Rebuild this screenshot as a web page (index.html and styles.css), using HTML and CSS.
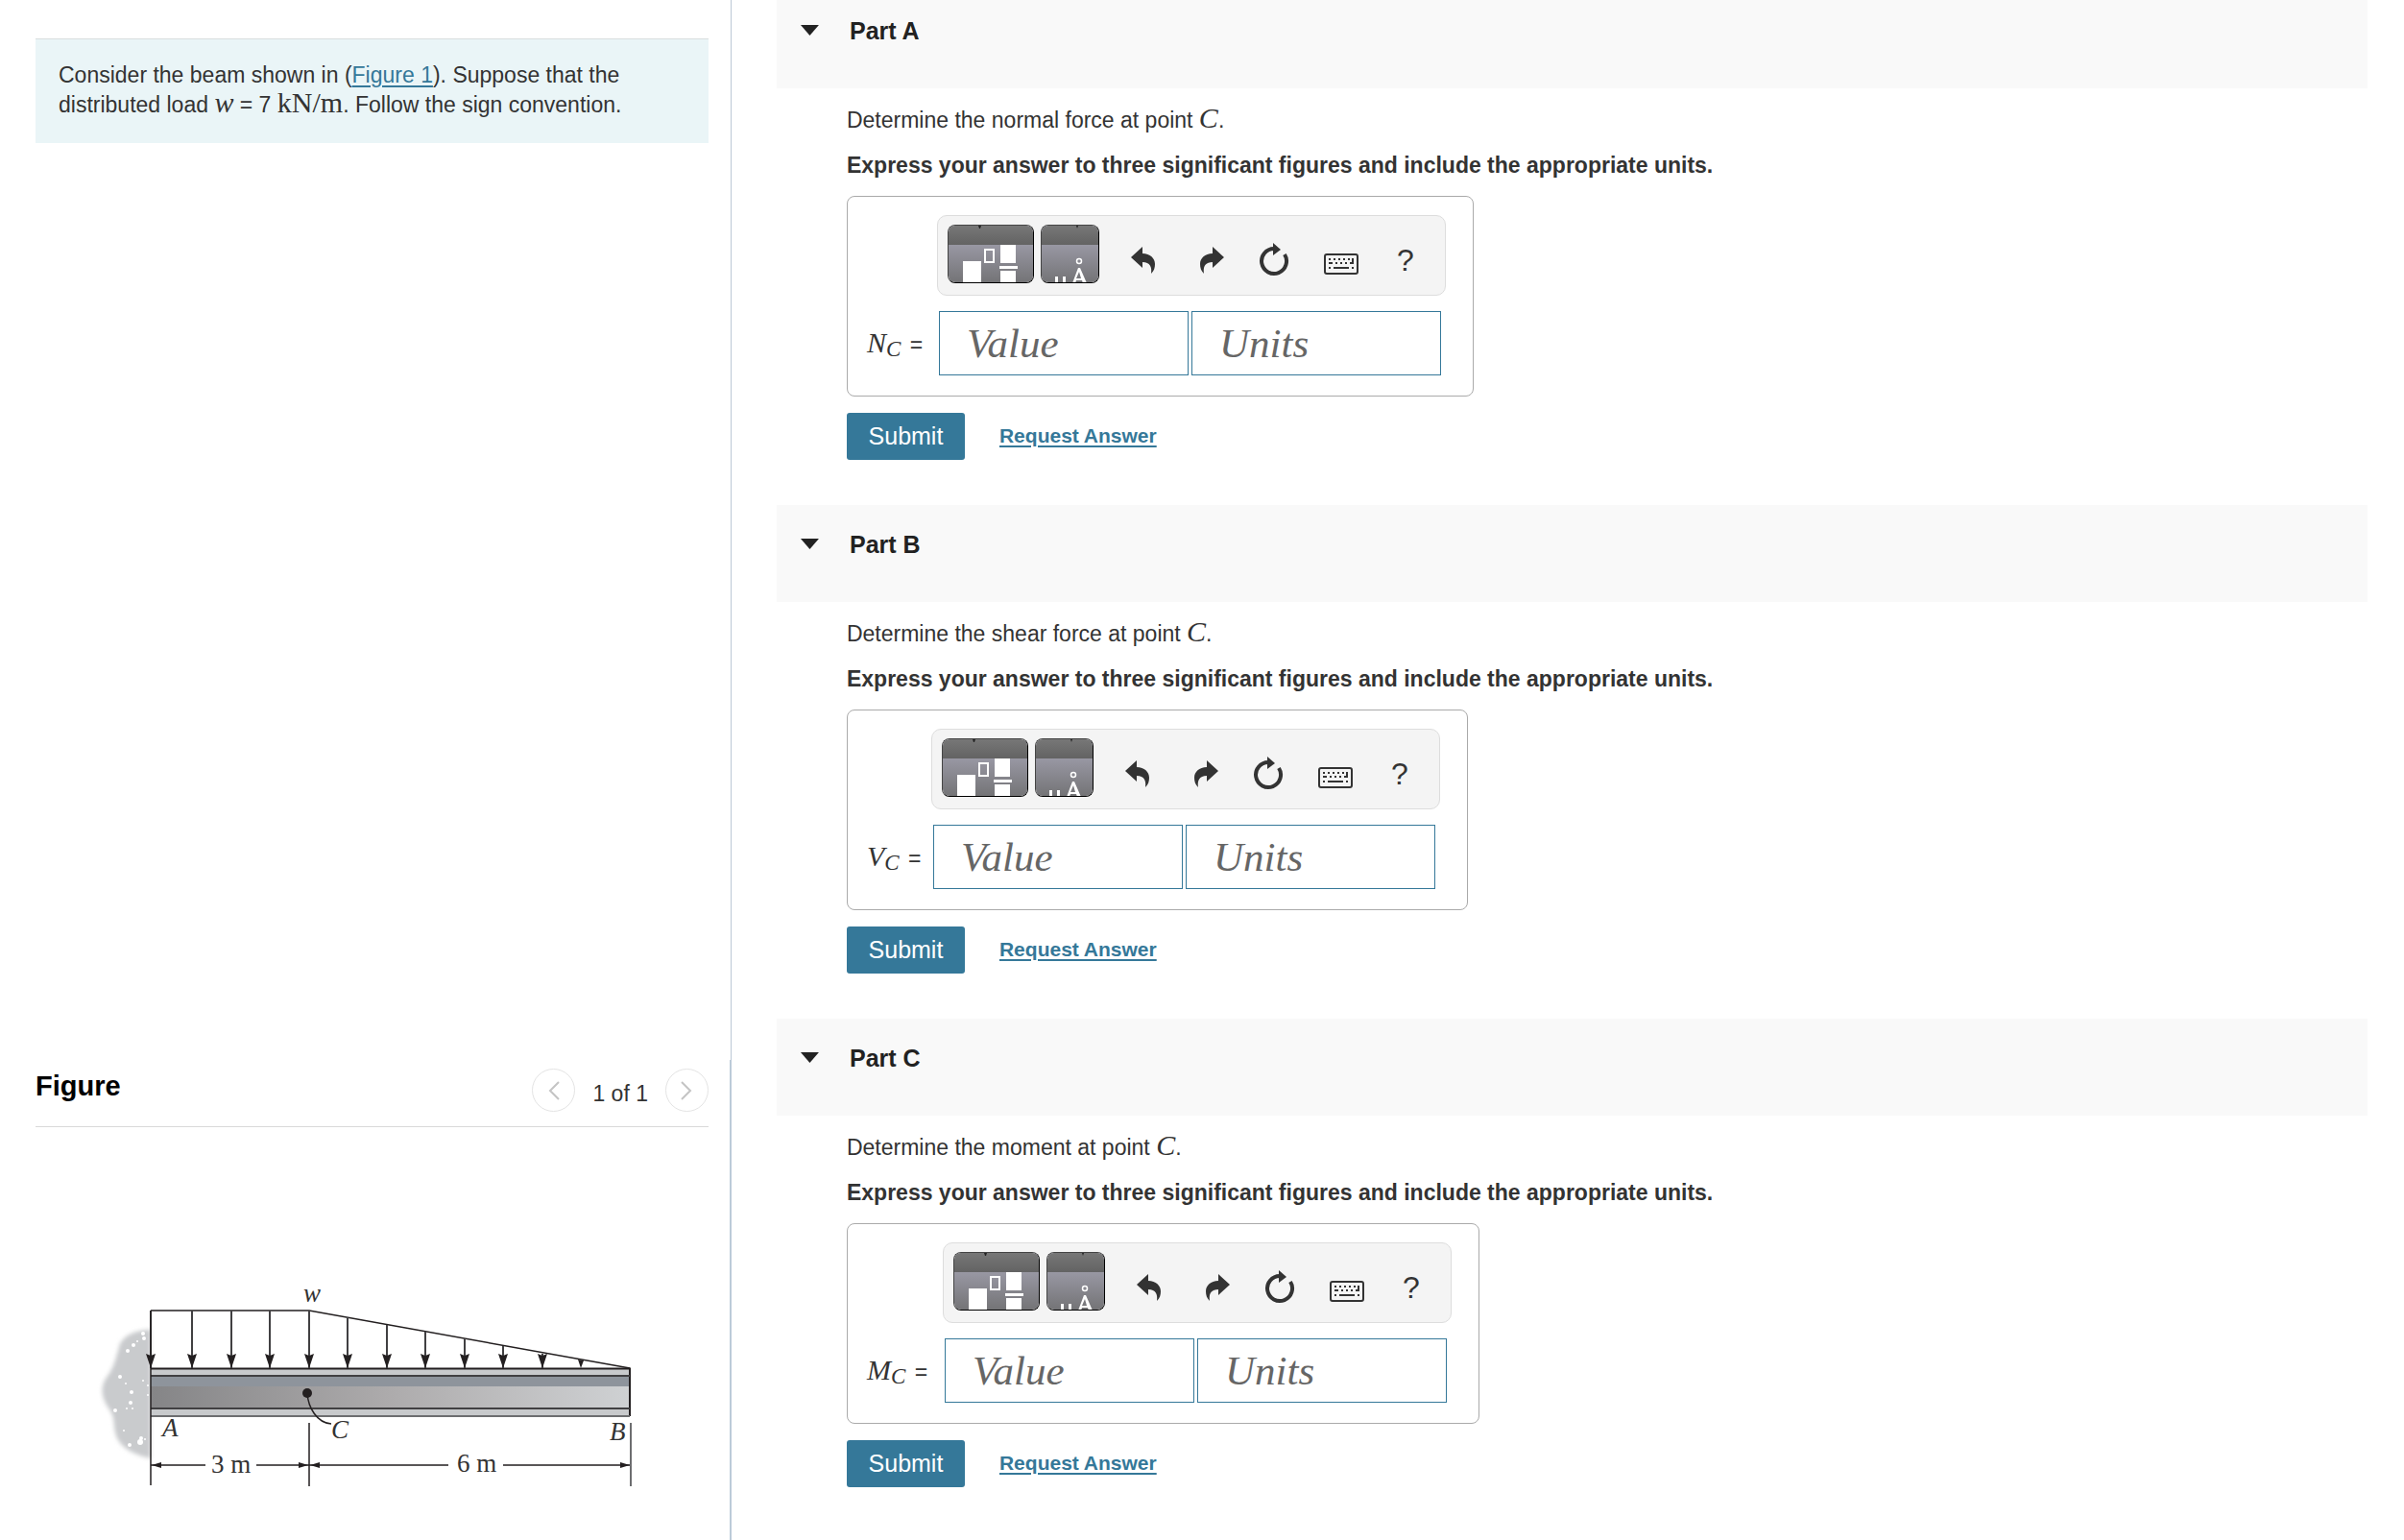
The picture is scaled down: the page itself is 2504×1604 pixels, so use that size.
FILE: index.html
```html
<!DOCTYPE html>
<html lang="en">
<head>
  <meta charset="UTF-8">
  <meta name="viewport" content="width=device-width, initial-scale=1.0">
  <title>Beam internal forces</title>
  <link rel="stylesheet" href="styles.css">
</head>
<body>
  <!-- shared icons -->
  <svg class="sprite" width="0" height="0" aria-hidden="true">
    <defs>
      <linearGradient id="capGrad" x1="0" y1="0" x2="0" y2="1">
        <stop offset="0" stop-color="#777"/>
        <stop offset="1" stop-color="#636363"/>
      </linearGradient>
      <linearGradient id="keyGrad" x1="0" y1="0" x2="0" y2="1">
        <stop offset=".3" stop-color="#9a99a5"/>
        <stop offset="1" stop-color="#727274"/>
      </linearGradient>
    </defs>
    <symbol id="templates" viewBox="0 0 90 61">
      <rect width="90" height="61" fill="url(#keyGrad)"/>
      <rect width="90" height="20" fill="url(#capGrad)"/>
      <path d="M31 0h3l-1 3h-1z" fill="#222"/>
      <path d="M15 37h19v23H15zM54 20h16v19H54zM53 42h19v3H53zM54 47h16v13H54z" fill="#fff"/>
      <rect x="38" y="25" width="9" height="13" fill="none" stroke="#fff" stroke-width="2"/>
    </symbol>
    <symbol id="symbols" viewBox="0 0 61 61">
      <rect width="61" height="61" fill="url(#keyGrad)"/>
      <rect width="61" height="20" fill="url(#capGrad)"/>
      <path d="M36 0h2l-1 3z" fill="#222"/>
      <path d="M14 53h3v7h-3zM22 53h3v7h-3z" fill="#fff"/>
      <path d="M38 44h2l7 16h-4l-1-3h-6l-1 3h-3zM39 48l-3 7h5z" fill="#fff" fill-rule="evenodd"/>
      <circle cx="39" cy="37" r="2.500" fill="none" stroke="#fff" stroke-width="1.500"/>
    </symbol>
    <symbol id="undo" viewBox="0 0 26 30">
      <path d="M0 12L12 1v7c8 0 13 5 13 11 0 4-1 7-4 10 1-7-1-12-9-12v6z"/>
    </symbol>
    <symbol id="redo" viewBox="0 0 26 30">
      <path d="M26 12L14 1v7C6 8 1 13 1 19c0 4 1 7 4 10-1-7 1-12 9-12v6z"/>
    </symbol>
    <symbol id="reset" viewBox="0 0 32 36">
      <path d="M16 6a13 13 0 1 0 11 6" fill="none" stroke="#333" stroke-width="4"/>
      <path d="M15 0l8 7-8 6z"/>
    </symbol>
    <symbol id="keyboard" viewBox="0 0 36 22">
      <rect x="1" y="1" width="34" height="20" rx="2" fill="none" stroke="#333" stroke-width="2"/>
      <path d="M5 5h2v2H5zM10 5h2v2h-2zM15 5h2v2h-2zM20 5h2v2h-2zM25 5h2v2h-2zM29 5h2v6h-4V9h2zM5 9h4v2H5zM12 9h2v2h-2zM17 9h2v2h-2zM22 9h2v2h-2zM5 14h2v2H5zM10 14h16v2H10zM29 14h2v2h-2z"/>
    </symbol>
  </svg>

  <div class="page">
    <aside class="side">
      <div class="intro-pane">
        <div class="intro">
          Consider the beam shown in (<a href="#figure">Figure 1</a>). Suppose that the distributed load <i class="math">w</i> = 7 <span class="math">kN/m</span>. Follow the sign convention.
        </div>
      </div>
      <section class="figure-pane" id="figure">
        <div class="figure-head">
          <h2>Figure</h2>
          <div class="pager">
            <button type="button" aria-label="Previous figure"><svg width="12" height="20" viewBox="0 0 12 20"><path d="M11 1L2 10l9 9"/></svg></button>
            <span>1 of 1</span>
            <button type="button" aria-label="Next figure"><svg width="12" height="20" viewBox="0 0 12 20"><path d="M1 1l9 9-9 9"/></svg></button>
          </div>
        </div>
        <svg class="beam" width="570" height="230" viewBox="0 0 570 230" role="img" aria-label="Beam AB with a distributed load">
          <defs>
            <linearGradient id="webGrad">
              <stop offset="0" stop-color="#858587"/>
              <stop offset=".5" stop-color="#adabac"/>
              <stop offset="1" stop-color="#cfd1d3"/>
            </linearGradient>
            <filter id="soft"><feGaussianBlur stdDeviation="2"/></filter>
            <marker id="load" viewBox="0 0 10 15" refX="5" refY="15" markerWidth="10" markerHeight="15" markerUnits="userSpaceOnUse" orient="0">
              <path d="M0 0l5 2 5-2-5 15z" fill="#231f20"/>
            </marker>
          </defs>
          <!-- wall -->
          <path d="M57 56C42 56 27 62 24 74C20 88 18 97 10 107C4 117 6 128 14 139C21 149 17 158 22 169C28 181 43 187 57 190z" fill="#c9cbcd" filter="url(#soft)"/>
          <g fill="#fff">
            <circle cx="49" cy="60" r="2"/><circle cx="50" cy="65" r="2"/><circle cx="39" cy="72" r="2"/><circle cx="33" cy="78" r="2"/><circle cx="43" cy="68" r="1"/>
            <circle cx="25" cy="105" r="2"/><circle cx="31" cy="112" r="1"/><circle cx="37" cy="121" r="2"/><circle cx="49" cy="109" r="1"/><circle cx="36" cy="132" r="2"/>
            <circle cx="32" cy="138" r="1"/><circle cx="38" cy="138" r="1"/><circle cx="20" cy="140" r="2"/><circle cx="54" cy="114" r="1"/><circle cx="54" cy="124" r="1"/>
            <circle cx="47" cy="169" r="2"/><circle cx="46" cy="173" r="3"/><circle cx="35" cy="176" r="2"/><circle cx="29" cy="161" r="1"/><circle cx="51" cy="170" r="1"/>
          </g>
          <!-- beam -->
          <rect x="57" y="96" width="499" height="50" fill="#c8cacc"/>
          <rect x="57" y="104" width="499" height="12" fill="#8e949c"/>
          <rect x="57" y="115" width="499" height="23" fill="url(#webGrad)"/>
          <g stroke="#414042" stroke-width="2" fill="none">
            <path d="M57 96.500H556V146" stroke="#231f20"/>
            <path d="M57 104H556M57 138H556"/>
            <path d="M57 146H556" stroke="#6d6e70"/>
          </g>
          <!-- load -->
          <path d="M57 36H222L556 96" fill="none" stroke="#231f20" stroke-width="1.500"/>
          <g class="arrows">
            <path d="M57 96V36"/><path d="M100 96V36"/><path d="M141 96V36"/><path d="M181 96V36"/><path d="M222 96V36"/>
            <path d="M262 96V43"/><path d="M303 96V51"/><path d="M343 96V58"/><path d="M384 96V65"/><path d="M424 96V73"/><path d="M465 96V81"/>
          </g>
          <path d="M502 87l6 1-3 8z" fill="#231f20"/>
          <!-- dimensions -->
          <g fill="none" stroke="#231f20" stroke-width="1.500">
            <path d="M57 36V218M222 153V219"/>
            <path d="M557 153V219" stroke="#6d6e70" stroke-width="2"/>
            <path d="M57 197H114M167 197H222M222 197H367M424 197H556"/>
            <path d="M220 122C221 137 230 153 245 154"/>
          </g>
          <path d="M58 197l10-3v6zM221 197l-10-3v6zM223 197l10-3v6zM556 197l-10-3v6z" fill="#231f20"/>
          <circle cx="220" cy="122" r="5" fill="#231f20"/>
          <g class="beam-text">
            <text x="216" y="27" class="var">w</text>
            <text x="69" y="167" class="var">A</text>
            <text x="245" y="169" class="var">C</text>
            <text x="535" y="171" class="var">B</text>
            <text x="120" y="205">3 m</text>
            <text x="376" y="204">6 m</text>
          </g>
        </svg>
      </section>
    </aside>

    <main class="parts">
      <section class="part part-a">
        <h2 class="part-head"><span class="caret"></span>Part A</h2>
        <div class="part-body">
          <p>Determine the normal force at point <i class="math">C</i>.</p>
          <p class="express">Express your answer to three significant figures and include the appropriate units.</p>
          <div class="answer">
            <div class="toolbar">
              <button type="button" class="key" aria-label="Templates"><svg width="90" height="61"><use href="#templates"/></svg></button>
              <button type="button" class="key key-sm" aria-label="Symbols"><svg width="61" height="61"><use href="#symbols"/></svg></button>
              <div class="tools">
                <button type="button" aria-label="Undo"><svg width="26" height="30"><use href="#undo"/></svg></button>
                <button type="button" class="redo" aria-label="Redo"><svg width="26" height="30"><use href="#redo"/></svg></button>
                <button type="button" aria-label="Reset"><svg width="32" height="36"><use href="#reset"/></svg></button>
                <button type="button" class="kbd" aria-label="Keyboard shortcuts"><svg width="36" height="22"><use href="#keyboard"/></svg></button>
                <button type="button" class="help">?</button>
              </div>
            </div>
            <label class="answer-label" for="valueA"><i>N<sub>C</sub></i> =</label>
            <div class="fields">
              <input type="text" id="valueA" placeholder="Value">
              <input type="text" aria-label="Units" placeholder="Units">
            </div>
          </div>
          <div class="actions">
            <button type="submit" class="submit">Submit</button>
            <a href="#">Request Answer</a>
          </div>
        </div>
      </section>

      <section class="part part-b">
        <h2 class="part-head"><span class="caret"></span>Part B</h2>
        <div class="part-body">
          <p>Determine the shear force at point <i class="math">C</i>.</p>
          <p class="express">Express your answer to three significant figures and include the appropriate units.</p>
          <div class="answer">
            <div class="toolbar">
              <button type="button" class="key" aria-label="Templates"><svg width="90" height="61"><use href="#templates"/></svg></button>
              <button type="button" class="key key-sm" aria-label="Symbols"><svg width="61" height="61"><use href="#symbols"/></svg></button>
              <div class="tools">
                <button type="button" aria-label="Undo"><svg width="26" height="30"><use href="#undo"/></svg></button>
                <button type="button" class="redo" aria-label="Redo"><svg width="26" height="30"><use href="#redo"/></svg></button>
                <button type="button" aria-label="Reset"><svg width="32" height="36"><use href="#reset"/></svg></button>
                <button type="button" class="kbd" aria-label="Keyboard shortcuts"><svg width="36" height="22"><use href="#keyboard"/></svg></button>
                <button type="button" class="help">?</button>
              </div>
            </div>
            <label class="answer-label" for="valueB"><i>V<sub>C</sub></i> =</label>
            <div class="fields">
              <input type="text" id="valueB" placeholder="Value">
              <input type="text" aria-label="Units" placeholder="Units">
            </div>
          </div>
          <div class="actions">
            <button type="submit" class="submit">Submit</button>
            <a href="#">Request Answer</a>
          </div>
        </div>
      </section>

      <section class="part part-c">
        <h2 class="part-head"><span class="caret"></span>Part C</h2>
        <div class="part-body">
          <p>Determine the moment at point <i class="math">C</i>.</p>
          <p class="express">Express your answer to three significant figures and include the appropriate units.</p>
          <div class="answer">
            <div class="toolbar">
              <button type="button" class="key" aria-label="Templates"><svg width="90" height="61"><use href="#templates"/></svg></button>
              <button type="button" class="key key-sm" aria-label="Symbols"><svg width="61" height="61"><use href="#symbols"/></svg></button>
              <div class="tools">
                <button type="button" aria-label="Undo"><svg width="26" height="30"><use href="#undo"/></svg></button>
                <button type="button" class="redo" aria-label="Redo"><svg width="26" height="30"><use href="#redo"/></svg></button>
                <button type="button" aria-label="Reset"><svg width="32" height="36"><use href="#reset"/></svg></button>
                <button type="button" class="kbd" aria-label="Keyboard shortcuts"><svg width="36" height="22"><use href="#keyboard"/></svg></button>
                <button type="button" class="help">?</button>
              </div>
            </div>
            <label class="answer-label" for="valueC"><i>M<sub>C</sub></i> =</label>
            <div class="fields">
              <input type="text" id="valueC" placeholder="Value">
              <input type="text" aria-label="Units" placeholder="Units">
            </div>
          </div>
          <div class="actions">
            <button type="submit" class="submit">Submit</button>
            <a href="#">Request Answer</a>
          </div>
        </div>
      </section>
    </main>
  </div>
</body>
</html>
```
FILE: styles.css
```css
* {
  box-sizing: border-box;
}
body {
  margin: 0;
  font-family: "Liberation Sans", Arial, sans-serif;
  font-size: 23px;
  line-height: 31px;
  color: #333;
  background: #fff;
}
h2, p {
  margin: 0;
}
button {
  padding: 0;
  border: none;
  background: none;
  font-family: inherit;
  color: inherit;
  cursor: pointer;
}
a {
  color: #357899;
  text-underline-offset: 3px;
  text-decoration-thickness: 2px;
}
.sprite {
  position: absolute;
}
.math {
  font-family: "Liberation Serif", "Times New Roman", serif;
  font-size: 30px;
  line-height: 1px;
}
.page {
  display: flex;
  min-height: 100vh;
}

/* left side */
.side {
  display: flex;
  flex-direction: column;
  flex: 0 0 30.43%;
}
.intro-pane {
  flex: 1;
  padding: 40px 23px 0 37px;
  border-right: 1px solid #bcc9d6;
}
.intro {
  padding: 22px 48px 24px 24px;
  border-top: 1px solid #d9dedf;
  background: #eaf5f7;
}
.figure-pane {
  height: 500px;
  padding: 9px 22px 0 37px;
  border-right: 2px solid #bccbd9;
}
.figure-head {
  display: flex;
  justify-content: space-between;
  height: 61px;
  border-bottom: 1px solid #d9d9d9;
}
.figure-head h2 {
  padding-top: 3px;
  font-size: 29px;
  color: #000;
}
.pager {
  display: flex;
  align-items: flex-start;
  gap: 18px;
}
.pager span {
  padding-top: 11px;
}
.pager button {
  display: flex;
  align-items: center;
  justify-content: center;
  width: 45px;
  height: 45px;
  border: 1px solid #e4e4e4;
  border-radius: 50%;
}
.pager path {
  fill: none;
  stroke: #c4c4c4;
  stroke-width: 2;
}
.beam {
  display: block;
  max-width: 100%;
  margin: 155px 0 0 63px;
}
.arrows path {
  stroke: #414042;
  stroke-width: 2;
  marker-start: url(#load);
}
.beam-text {
  font-family: "Liberation Serif", "Times New Roman", serif;
  font-size: 27px;
  fill: #333;
}
.beam-text .var {
  font-style: italic;
}

/* parts */
.parts {
  flex: 1;
  min-width: 0;
  padding: 0 38px 0 47px;
}
.part-head {
  display: flex;
  align-items: flex-start;
  height: 101px;
  padding: 26px 0 0 25px;
  font-size: 25px;
  line-height: 30px;
  color: #222;
  background: #f9f9f9;
}
.part-a .part-head {
  height: 92px;
  padding-top: 17px;
}
.caret {
  width: 19px;
  height: 11px;
  margin: 9px 32px 0 0;
  background: #222;
  clip-path: polygon(0 0, 100% 0, 50% 100%);
}
.part-body {
  padding: 18px 0 47px 73px;
}
.express {
  padding: 16px 0;
  font-weight: bold;
}
.answer {
  display: grid;
  grid-template-columns: 76px auto;
  row-gap: 16px;
  width: max-content;
  padding: 19px 28px 21px 17px;
  border: 1px solid #aaa;
  border-radius: 8px;
}
.part-b .answer {
  grid-template-columns: 70px auto;
}
.part-c .answer {
  grid-template-columns: 82px auto;
}
.toolbar {
  grid-column: 2;
  display: flex;
  align-items: flex-start;
  gap: 7px;
  width: 530px;
  height: 84px;
  padding: 9px 10px;
  border: 1px solid #ddd;
  border-radius: 10px;
  background: #f4f4f4;
}
.key {
  width: 90px;
  height: 61px;
  border: 1px solid;
  border-color: #444 #000 #000 #444;
  border-radius: 8px;
  overflow: hidden;
}
.key-sm {
  width: 61px;
}
.key svg, .tools svg {
  display: block;
}
.tools {
  display: flex;
  flex: 1;
  align-items: center;
  gap: 36px;
  height: 74px;
  padding-left: 26px;
  fill: #333;
}
.redo {
  margin-left: 9px;
}
.kbd {
  padding-top: 8px;
}
.help {
  margin-left: 4px;
  font-size: 32px;
}
.answer-label {
  align-self: center;
  padding-left: 3px;
  white-space: nowrap;
}
.answer-label i {
  margin-right: 3px;
  font-family: "Liberation Serif", "Times New Roman", serif;
  font-size: 30px;
}
.answer-label sub {
  font-size: 23px;
  line-height: 1px;
  vertical-align: -4px;
}
.fields {
  display: flex;
  gap: 3px;
  padding-left: 2px;
}
.fields input {
  width: 260px;
  height: 67px;
  padding: 0 28px;
  border: 1px solid #357899;
  font-family: "Liberation Serif", "Times New Roman", serif;
  font-size: 43px;
  font-style: italic;
  outline: none;
}
.fields input::placeholder {
  color: #666;
  opacity: 1;
}
.actions {
  display: flex;
  align-items: center;
  gap: 36px;
  margin-top: 17px;
}
.actions a {
  padding-bottom: 2px;
  font-size: 21px;
  font-weight: bold;
}
.submit {
  width: 123px;
  height: 49px;
  border-radius: 3px;
  font-size: 25px;
  color: #fff;
  background: #357899;
}
```
